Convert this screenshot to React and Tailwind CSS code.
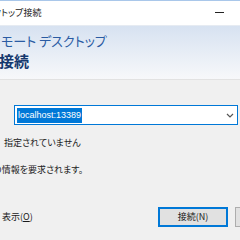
const jp = "font-['Noto_Sans_CJK_JP',sans-serif] [font-feature-settings:'palt']";

export default function App() {
  return (
    <div className="w-[240px] h-[240px] overflow-hidden bg-[#f0f0f0] flex flex-col">
      {/* Title bar */}
      <div className="h-[25px] shrink-0 bg-white border-t border-[#a9c7ea] flex items-center justify-between">
        <span className={`${jp} text-[9px] text-[#1a1a1a] ml-[-7px] whitespace-nowrap`}>クトップ接続</span>
        <div className="w-[9px] h-px bg-[#222] mr-[16px] mb-[1px]" />
      </div>

      {/* Header */}
      <div className="h-[55px] shrink-0 bg-gradient-to-b from-[#d7e2f1] to-[#f7f8fa] border-t border-[#e6ebf2] border-b border-b-[#e2e2e2] flex flex-col pt-[6px]">
        <span className={`${jp} text-[13px] leading-[17px] text-[#2a5ba3] ml-[1px] whitespace-nowrap`}>モート デスクトップ</span>
        <span className={`${jp} text-[15px] leading-[24px] font-bold text-[#15386e] ml-[-1px]`}>接続</span>
      </div>

      {/* Body */}
      <div className="flex-1 flex flex-col pt-[25px]">
        <div className="ml-[14px] mr-[2px] h-[20px] bg-white border border-[#0078d7] flex items-center justify-between">
          <span className="ml-[2px] h-[15px] px-[1px] bg-[#0078d7] text-white text-[9px] leading-[15px] font-['Liberation_Sans',sans-serif]">localhost:13389</span>
          <svg width="8" height="5" viewBox="0 0 8 5" className="mr-[3px]">
            <path d="M1 1l3 3 3-3" fill="none" stroke="#555" strokeWidth="1.2" />
          </svg>
        </div>

        <span className={`${jp} text-[9px] leading-[12px] text-[#1a1a1a] mt-[12px] ml-[4px] whitespace-nowrap`}>指定されていません</span>
        <span className={`${jp} text-[9px] leading-[12px] text-[#1a1a1a] mt-[15px] ml-[-7px] whitespace-nowrap`}>の情報を要求されます。</span>

        <div className="mt-[31px] flex items-center">
          <span className={`${jp} text-[9px] leading-[12px] text-[#1a1a1a] ml-[2px] w-[156px] shrink-0 whitespace-nowrap`}>
            表示(<span className="underline">O</span>)
          </span>
          <div className={`${jp} w-[70px] h-[20px] shrink-0 bg-[#e1e1e1] border-2 border-[#0078d7] flex items-center justify-center text-[9px] text-[#1a1a1a]`}>
            接続(N)
          </div>
          <div className="ml-[7px] w-[40px] h-[20px] shrink-0 bg-[#e1e1e1] border border-[#adadad]" />
        </div>
      </div>
    </div>
  );
}
